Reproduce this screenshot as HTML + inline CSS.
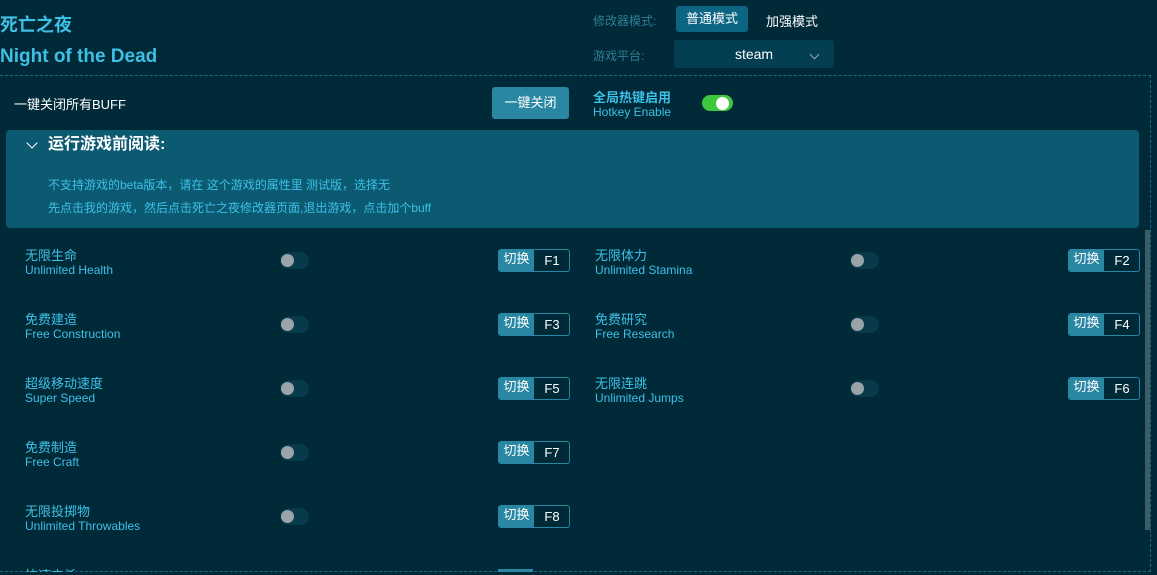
<!DOCTYPE html>
<html><head><meta charset="utf-8"><style>
*{margin:0;padding:0;box-sizing:border-box}
body{width:1157px;height:575px;background:#012a38;font-family:"Liberation Sans","Noto Sans CJK SC",sans-serif;position:relative;overflow:hidden;color:#fff}
.a{position:absolute;white-space:nowrap}
.cy{color:#3ec0e6}
.frame{position:absolute;left:0;top:75px;width:1151px;height:497px;border:1px dashed #1d6a80;border-left:none}
.tg{position:absolute;width:29px;height:17px;border-radius:9px;background:#073a4a}
.tg:after{content:"";position:absolute;left:1px;top:2px;width:13px;height:13px;border-radius:50%;background:#9aa3a8}
.hk{position:absolute;width:72px;height:23px;border:1px solid #2a87a4;border-radius:3px;overflow:hidden;font-size:13px}
.hk b{position:absolute;left:0;top:0;width:35px;height:21px;background:#2a87a4;font-weight:normal;text-align:center;line-height:18px}
.hk i{position:absolute;left:35px;top:0;width:36px;height:21px;font-style:normal;text-align:center;line-height:22px}
.l1{font-size:13px;color:#3ec0e6}
.l2{font-size:12px;color:#3ec0e6}
</style></head><body>
<div class="a cy" style="left:0;top:11px;font-size:18px;font-weight:bold">死亡之夜</div>
<div class="a cy" style="left:0;top:46px;font-size:19px;font-weight:bold">Night of the Dead</div>
<div class="a" style="left:593px;top:12px;font-size:12px;color:#2f7f95">修改器模式:</div>
<div class="a" style="left:676px;top:6px;width:72px;height:26px;background:#0b6583;border-radius:3px;font-size:13px;text-align:center;line-height:26px">普通模式</div>
<div class="a" style="left:766px;top:11px;font-size:13px">加强模式</div>
<div class="a" style="left:593px;top:47px;font-size:12px;color:#2f7f95">游戏平台:</div>
<div class="a" style="left:674px;top:40px;width:160px;height:28px;background:#033e52;border-radius:3px;font-size:14px;text-align:center;line-height:28px">steam</div>
<div class="a" style="left:811px;top:51px;width:7px;height:7px;border-right:1px solid #9ab;border-bottom:1px solid #9ab;transform:rotate(45deg)"></div>
<div class="frame"></div>
<div class="a" style="left:14px;top:94px;font-size:13px">一键关闭所有BUFF</div>
<div class="a" style="left:492px;top:87px;width:77px;height:32px;background:#2a87a4;border-radius:3px;font-size:13px;text-align:center;line-height:32px">一键关闭</div>
<div class="a cy" style="left:593px;top:87px;font-size:13px;font-weight:bold">全局热键启用</div>
<div class="a cy" style="left:593px;top:105px;font-size:12px">Hotkey Enable</div>
<div class="a" style="left:702px;top:95px;width:31px;height:16px;border-radius:8px;background:#3fc63f"></div>
<div class="a" style="left:716px;top:97px;width:13px;height:13px;border-radius:50%;background:#fff"></div>
<div class="a" style="left:6px;top:130px;width:1133px;height:98px;background:#0b5a72;border-radius:4px"></div>
<div class="a" style="left:28px;top:139px;width:8px;height:8px;border-right:1.5px solid #fff;border-bottom:1.5px solid #fff;transform:rotate(45deg)"></div>
<div class="a" style="left:48px;top:135px;font-size:16px;font-weight:bold;line-height:20px">运行游戏前阅读:</div>
<div class="a cy" style="left:48px;top:176px;font-size:12px">不支持游戏的beta版本，请在 这个游戏的属性里 测试版，选择无</div>
<div class="a cy" style="left:48px;top:199px;font-size:12px">先点击我的游戏，然后点击死亡之夜修改器页面,退出游戏，点击加个buff</div>
<div class="a" style="left:1145px;top:230px;width:5px;height:300px;background:#3d5c66"></div>

<div class="a l1" style="left:25px;top:245px">无限生命</div><div class="a l2" style="left:25px;top:263px">Unlimited Health</div>
<div class="tg" style="left:280px;top:252px"></div><div class="hk" style="left:498px;top:249px"><b>切换</b><i>F1</i></div>
<div class="a l1" style="left:595px;top:245px">无限体力</div><div class="a l2" style="left:595px;top:263px">Unlimited Stamina</div>
<div class="tg" style="left:850px;top:252px"></div><div class="hk" style="left:1068px;top:249px"><b>切换</b><i>F2</i></div>

<div class="a l1" style="left:25px;top:309px">免费建造</div><div class="a l2" style="left:25px;top:327px">Free Construction</div>
<div class="tg" style="left:280px;top:316px"></div><div class="hk" style="left:498px;top:313px"><b>切换</b><i>F3</i></div>
<div class="a l1" style="left:595px;top:309px">免费研究</div><div class="a l2" style="left:595px;top:327px">Free Research</div>
<div class="tg" style="left:850px;top:316px"></div><div class="hk" style="left:1068px;top:313px"><b>切换</b><i>F4</i></div>

<div class="a l1" style="left:25px;top:373px">超级移动速度</div><div class="a l2" style="left:25px;top:391px">Super Speed</div>
<div class="tg" style="left:280px;top:380px"></div><div class="hk" style="left:498px;top:377px"><b>切换</b><i>F5</i></div>
<div class="a l1" style="left:595px;top:373px">无限连跳</div><div class="a l2" style="left:595px;top:391px">Unlimited Jumps</div>
<div class="tg" style="left:850px;top:380px"></div><div class="hk" style="left:1068px;top:377px"><b>切换</b><i>F6</i></div>

<div class="a l1" style="left:25px;top:437px">免费制造</div><div class="a l2" style="left:25px;top:455px">Free Craft</div>
<div class="tg" style="left:280px;top:444px"></div><div class="hk" style="left:498px;top:441px"><b>切换</b><i>F7</i></div>

<div class="a l1" style="left:25px;top:501px">无限投掷物</div><div class="a l2" style="left:25px;top:519px">Unlimited Throwables</div>
<div class="tg" style="left:280px;top:508px"></div><div class="hk" style="left:498px;top:505px"><b>切换</b><i>F8</i></div>

<div class="a l1" style="left:25px;top:565px;height:7px;overflow:hidden">快速击杀</div>
<div class="a" style="left:498px;top:569px;width:35px;height:3px;background:#2a87a4"></div>
</body></html>
